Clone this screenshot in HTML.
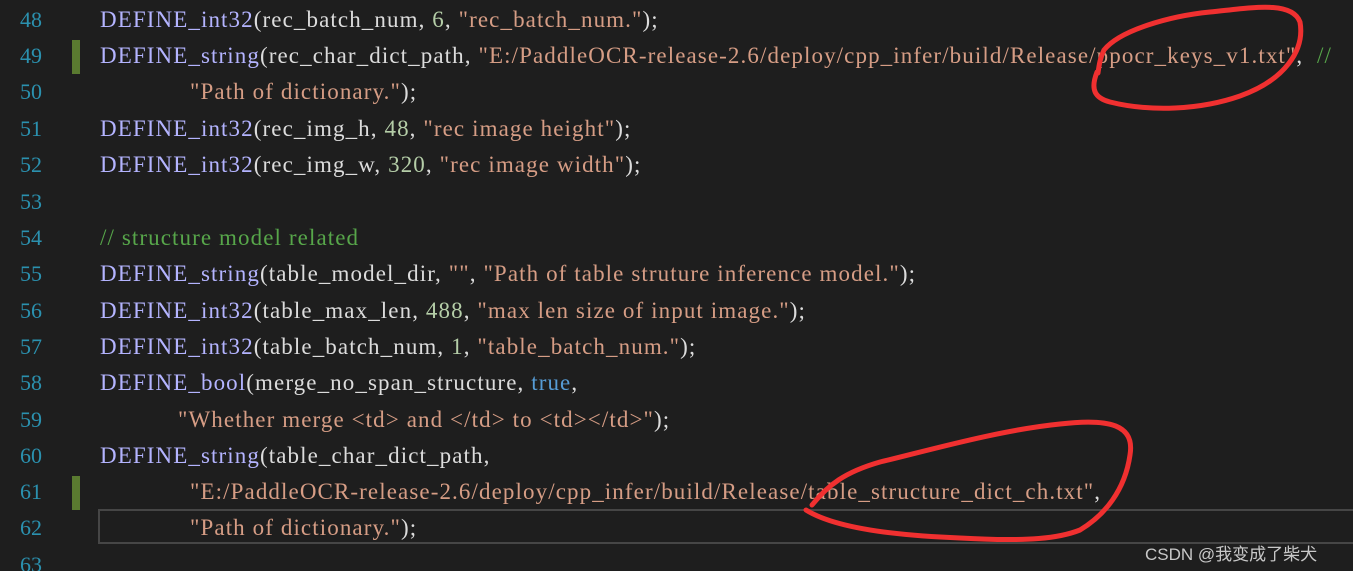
<!DOCTYPE html>
<html><head><meta charset="utf-8"><style>
html,body{margin:0;padding:0;background:#1e1e1e;width:1353px;height:571px;overflow:hidden;position:relative}
.l{position:absolute;left:0;height:36px;line-height:36px;font-family:"Liberation Serif",serif;font-size:23px;white-space:pre;color:#dcdcdc}
.n{position:absolute;width:42px;text-align:right;color:#2b91af;left:0;font-size:22px}
.c{position:absolute;left:100px;letter-spacing:1.1px}
.k{color:#b4b4ff}.s{color:#d69d85}.d{color:#b5cea8}.g{color:#57a64a}.b{color:#569cd6}
.mk{position:absolute;left:72px;width:8px;height:34px;background:#5a7a30}
</style></head><body>
<div style="position:absolute;left:98px;top:509px;width:1255px;height:35px;border:2px solid #464646;border-right:none;box-sizing:border-box"></div>
<div class="mk" style="top:40px"></div>
<div class="mk" style="top:476px"></div>
<div class="l" style="top:2px"><span class="n">48</span><span class="c"><span class="k">DEFINE_int32</span>(rec_batch_num, <span class="d">6</span>, <span class="s">"rec_batch_num."</span>);</span></div>
<div class="l" style="top:38px"><span class="n">49</span><span class="c"><span class="k">DEFINE_string</span>(rec_char_dict_path, <span class="s">"E:/PaddleOCR-release-2.6/deploy/cpp_infer/build/Release/ppocr_keys_v1.txt"</span>,  <span class="g">//</span></span></div>
<div class="l" style="top:74px"><span class="n">50</span><span class="c" style="left:190px"><span class="s">"Path of dictionary."</span>);</span></div>
<div class="l" style="top:111px"><span class="n">51</span><span class="c"><span class="k">DEFINE_int32</span>(rec_img_h, <span class="d">48</span>, <span class="s">"rec image height"</span>);</span></div>
<div class="l" style="top:147px"><span class="n">52</span><span class="c"><span class="k">DEFINE_int32</span>(rec_img_w, <span class="d">320</span>, <span class="s">"rec image width"</span>);</span></div>
<div class="l" style="top:184px"><span class="n">53</span></div>
<div class="l" style="top:220px"><span class="n">54</span><span class="c"><span class="g">// structure model related</span></span></div>
<div class="l" style="top:256px"><span class="n">55</span><span class="c"><span class="k">DEFINE_string</span>(table_model_dir, <span class="s">""</span>, <span class="s">"Path of table struture inference model."</span>);</span></div>
<div class="l" style="top:293px"><span class="n">56</span><span class="c"><span class="k">DEFINE_int32</span>(table_max_len, <span class="d">488</span>, <span class="s">"max len size of input image."</span>);</span></div>
<div class="l" style="top:329px"><span class="n">57</span><span class="c"><span class="k">DEFINE_int32</span>(table_batch_num, <span class="d">1</span>, <span class="s">"table_batch_num."</span>);</span></div>
<div class="l" style="top:365px"><span class="n">58</span><span class="c"><span class="k">DEFINE_bool</span>(merge_no_span_structure, <span class="b">true</span>,</span></div>
<div class="l" style="top:402px"><span class="n">59</span><span class="c" style="left:178px"><span class="s">"Whether merge &lt;td&gt; and &lt;/td&gt; to &lt;td&gt;&lt;/td&gt;"</span>);</span></div>
<div class="l" style="top:438px"><span class="n">60</span><span class="c"><span class="k">DEFINE_string</span>(table_char_dict_path,</span></div>
<div class="l" style="top:474px"><span class="n">61</span><span class="c" style="left:190px"><span class="s">"E:/PaddleOCR-release-2.6/deploy/cpp_infer/build/Release/table_structure_dict_ch.txt"</span>,</span></div>
<div class="l" style="top:510px"><span class="n">62</span><span class="c" style="left:190px"><span class="s">"Path of dictionary."</span>);</span></div>
<div class="l" style="top:547px"><span class="n">63</span></div>
<div style="position:absolute;left:1145px;top:540px;font-family:'Liberation Sans','Noto Sans CJK SC',sans-serif;font-size:17px;color:#c8c8c8">CSDN @我变成了柴犬</div>
<svg width="1353" height="571" style="position:absolute;left:0;top:0" fill="none" stroke="#f03030" stroke-width="5" stroke-linecap="round">
<path d="M1097 72 C1090 90 1095 98 1110 102 C1150 112 1200 110 1240 96 C1285 80 1305 50 1300 22 C1292 0 1250 8 1210 12 C1170 16 1120 30 1104 50 C1100 58 1099 66 1098 73"/>
<path d="M806 510 C830 525 880 535 960 538 C1030 542 1060 538 1080 530 C1105 515 1125 490 1130 455 C1135 425 1110 418 1060 424 C1000 430 930 450 880 462 C845 472 828 485 812 505"/>
</svg>
</body></html>
